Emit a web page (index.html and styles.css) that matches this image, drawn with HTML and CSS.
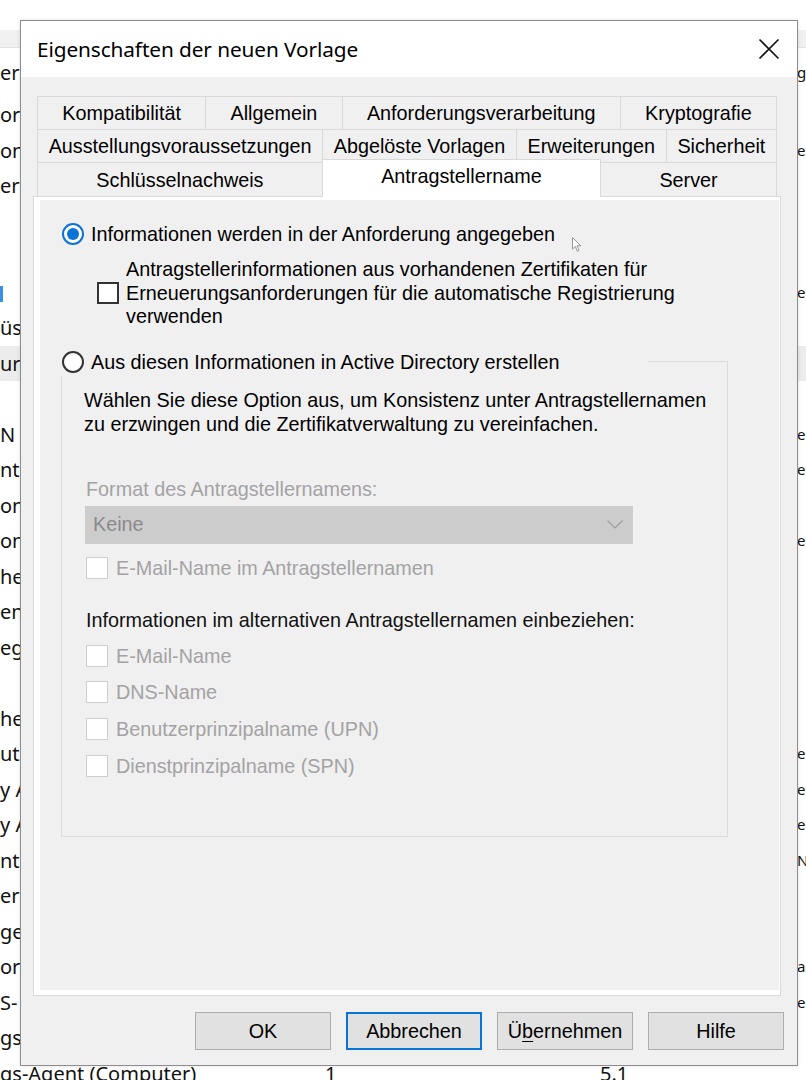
FILE: index.html
```html
<!DOCTYPE html>
<html lang="de">
<head>
<meta charset="utf-8">
<title>Eigenschaften der neuen Vorlage</title>
<link rel="stylesheet" href="styles.css">
</head>
<body>
<div class="bg">
  <div class="bg-head"></div>
  <div class="bg-row first"><span class="c1">er</span><span class="c2"></span><span class="c3"></span><span class="c4">g</span></div>
  <div class="bg-row"><span class="c1">or</span><span class="c2"></span><span class="c3"></span><span class="c4"></span></div>
  <div class="bg-row"><span class="c1">ons</span><span class="c2"></span><span class="c3"></span><span class="c4">e</span></div>
  <div class="bg-row"><span class="c1">ert</span><span class="c2"></span><span class="c3"></span><span class="c4"></span></div>
  <div class="bg-row"><span class="c1"></span><span class="c2"></span><span class="c3"></span><span class="c4"></span></div>
  <div class="bg-row"><span class="c1"></span><span class="c2"></span><span class="c3"></span><span class="c4"></span></div>
  <div class="bg-row"><span class="c1"><span class="blue-mark"></span></span><span class="c2"></span><span class="c3"></span><span class="c4">e</span></div>
  <div class="bg-row"><span class="c1">üs</span><span class="c2"></span><span class="c3"></span><span class="c4"></span></div>
  <div class="bg-row sel"><span class="c1">ur</span><span class="c2"></span><span class="c3"></span><span class="c4"></span></div>
  <div class="bg-row"><span class="c1"></span><span class="c2"></span><span class="c3"></span><span class="c4"></span></div>
  <div class="bg-row"><span class="c1">N</span><span class="c2"></span><span class="c3"></span><span class="c4">e</span></div>
  <div class="bg-row"><span class="c1">ntr</span><span class="c2"></span><span class="c3"></span><span class="c4">e</span></div>
  <div class="bg-row"><span class="c1">ont</span><span class="c2"></span><span class="c3"></span><span class="c4"></span></div>
  <div class="bg-row"><span class="c1">ont</span><span class="c2"></span><span class="c3"></span><span class="c4">e</span></div>
  <div class="bg-row"><span class="c1">he</span><span class="c2"></span><span class="c3"></span><span class="c4"></span></div>
  <div class="bg-row"><span class="c1">en</span><span class="c2"></span><span class="c3"></span><span class="c4"></span></div>
  <div class="bg-row"><span class="c1">eg</span><span class="c2"></span><span class="c3"></span><span class="c4"></span></div>
  <div class="bg-row"><span class="c1"></span><span class="c2"></span><span class="c3"></span><span class="c4"></span></div>
  <div class="bg-row"><span class="c1">hea</span><span class="c2"></span><span class="c3"></span><span class="c4"></span></div>
  <div class="bg-row"><span class="c1">uth</span><span class="c2"></span><span class="c3"></span><span class="c4">e</span></div>
  <div class="bg-row"><span class="c1">y A</span><span class="c2"></span><span class="c3"></span><span class="c4">e</span></div>
  <div class="bg-row"><span class="c1">y A</span><span class="c2"></span><span class="c3"></span><span class="c4">e</span></div>
  <div class="bg-row"><span class="c1">nts</span><span class="c2"></span><span class="c3"></span><span class="c4">N</span></div>
  <div class="bg-row"><span class="c1">ers</span><span class="c2"></span><span class="c3"></span><span class="c4"></span></div>
  <div class="bg-row"><span class="c1">ge-</span><span class="c2"></span><span class="c3"></span><span class="c4"></span></div>
  <div class="bg-row"><span class="c1">or</span><span class="c2"></span><span class="c3"></span><span class="c4">a</span></div>
  <div class="bg-row"><span class="c1">S-</span><span class="c2"></span><span class="c3"></span><span class="c4">e</span></div>
  <div class="bg-row"><span class="c1">gs</span><span class="c2"></span><span class="c3"></span><span class="c4"></span></div>
  <div class="bg-row"><span class="c1">gs-Agent (Computer)</span><span class="c2">1</span><span class="c3">5.1</span><span class="c4"></span></div>
</div>

<div class="dialog">
  <div class="titlebar">
    <span class="title">Eigenschaften der neuen Vorlage</span>
    <svg class="close" viewBox="0 0 22 22" width="22" height="22"><path d="M1.5 1.5 L20.5 20.5 M20.5 1.5 L1.5 20.5" stroke="#111" stroke-width="1.6" fill="none"/></svg>
  </div>
  <div class="body">
    <div class="tabs">
      <div class="tabrow">
        <div class="tab">Kompatibilität</div>
        <div class="tab">Allgemein</div>
        <div class="tab">Anforderungsverarbeitung</div>
        <div class="tab">Kryptografie</div>
      </div>
      <div class="tabrow">
        <div class="tab">Ausstellungsvoraussetzungen</div>
        <div class="tab">Abgelöste Vorlagen</div>
        <div class="tab">Erweiterungen</div>
        <div class="tab">Sicherheit</div>
      </div>
      <div class="tabrow last">
        <div class="tab">Schlüsselnachweis</div>
        <div class="tab active">Antragstellername</div>
        <div class="tab">Server</div>
      </div>
    </div>
    <div class="panel">
      <div class="page">
        <div class="opt">
          <span class="radio checked"></span>
          <span>Informationen werden in der Anforderung angegeben</span>
        </div>
        <div class="check-block">
          <span class="box"></span>
          <span class="check-text">Antragstellerinformationen aus vorhandenen Zertifikaten für<br>Erneuerungsanforderungen für die automatische Registrierung<br>verwenden</span>
        </div>
        <div class="group">
          <div class="group-head">
            <span class="radio"></span>
            <span>Aus diesen Informationen in Active Directory erstellen</span>
          </div>
          <p class="desc">Wählen Sie diese Option aus, um Konsistenz unter Antragstellernamen<br>zu erzwingen und die Zertifikatverwaltung zu vereinfachen.</p>
          <div class="label dis">Format des Antragstellernamens:</div>
          <div class="combo">
            <span>Keine</span>
            <svg viewBox="0 0 16 9" width="16" height="9"><polyline points="0.5,0.5 8,8 15.5,0.5" fill="none" stroke="#9c9c9c" stroke-width="1.2"/></svg>
          </div>
          <div class="dcheck first"><span class="dbox"></span><span>E-Mail-Name im Antragstellernamen</span></div>
          <div class="label alt">Informationen im alternativen Antragstellernamen einbeziehen:</div>
          <div class="dlist">
            <div class="dcheck"><span class="dbox"></span><span>E-Mail-Name</span></div>
            <div class="dcheck"><span class="dbox"></span><span>DNS-Name</span></div>
            <div class="dcheck"><span class="dbox"></span><span>Benutzerprinzipalname (UPN)</span></div>
            <div class="dcheck"><span class="dbox"></span><span>Dienstprinzipalname (SPN)</span></div>
          </div>
        </div>
      </div>
    </div>
    <div class="buttons">
      <button class="btn">OK</button>
      <button class="btn default">Abbrechen</button>
      <button class="btn">Ü<u>b</u>ernehmen</button>
      <button class="btn">Hilfe</button>
    </div>
  </div>
  <svg class="cursor" viewBox="0 0 10 15" width="10" height="15"><path d="M0.5 0.5 L0.5 12 L3.2 9.4 L5.3 14.2 L7 13.4 L5 8.8 L8.8 8.8 Z" fill="#fff" stroke="#8a8a8a" stroke-width="0.9"/></svg>
</div>
</body>
</html>
```

FILE: styles.css
```css
* { box-sizing: border-box; }
html, body { margin: 0; padding: 0; }
body {
  width: 806px;
  height: 1080px;
  overflow: hidden;
  background: #fff;
  position: relative;
  font-family: "Noto Sans", "Open Sans", sans-serif;
}

/* background list window */
.bg { padding-top: 30px; }
.bg-head {
  height: 18px;
  background: #f0f0f0;
  border-bottom: 1px solid #e3e3e3;
}
.bg-row {
  display: grid;
  grid-template-columns: 325px 275px 197px 9px;
  height: 35.5px;
  line-height: 35.5px;
  font-size: 20px;
  color: #111;
  white-space: nowrap;
  overflow: hidden;
}
.bg-row.first { height: 49.25px; line-height: 49px; }
.bg-row.sel { background: #ececec; }
.c1, .c2, .c3 { overflow: hidden; }
.c4 { font-size: 15px; }
.blue-mark {
  display: inline-block;
  width: 3px;
  height: 16px;
  background: #3b8fe0;
  vertical-align: middle;
}

/* dialog window */
.dialog {
  position: absolute;
  left: 20px;
  top: 20px;
  width: 778px;
  height: 1046px;
  border: 1px solid #8d8d8d;
  background: #f0f0f0;
  box-shadow: 0 0 4px rgba(0,0,0,0.12);
  font-family: "Liberation Sans", Arial, sans-serif;
  font-size: 19.8px;
  color: #000;
}
.titlebar {
  height: 56px;
  background: #fff;
  display: flex;
  align-items: center;
  justify-content: space-between;
  padding: 0 17px 0 16px;
}
.title {
  font-family: "Noto Sans", "Open Sans", sans-serif;
  font-size: 20.8px;
  color: #000;
  letter-spacing: -0.1px;
}
.close { display: block; }

.body { padding: 19px 16px 15px 12px; }

.tabs { padding: 0 4px; }
.tabrow {
  display: flex;
  height: 33px;
}
.tabrow.last { height: 34px; align-items: flex-end; }
.tab {
  flex: 1 1 auto;
  border: 1px solid #d9d9d9;
  border-bottom: none;
  margin-left: -1px;
  text-align: center;
  line-height: 32px;
  white-space: nowrap;
  background: #f0f0f0;
}
.tab:first-child { margin-left: 0; }
.tabrow.last .tab { height: 34px; line-height: 34px; }
.tabrow.last .tab.active {
  height: 38px;
  line-height: 32px;
  margin-bottom: -1px;
  background: #fff;
  position: relative;
  z-index: 1;
  padding-bottom: 4px;
}

.panel {
  height: 800px;
  border: 1px solid #d9d9d9;
  background: #fff;
  padding: 3px 1px 5px 6px;
}
.page {
  height: 790px;
  background: #f0f0f0;
  padding: 22px 0 0 22px;
}

.opt, .group-head {
  display: flex;
  align-items: center;
  gap: 7px;
  height: 24px;
  line-height: 24px;
  white-space: nowrap;
}
.radio {
  flex: none;
  width: 22px;
  height: 22px;
  border-radius: 50%;
  border: 2px solid #333;
  background: #fff;
  position: relative;
}
.radio.checked { border-color: #0a74d6; }
.radio.checked::after {
  content: "";
  position: absolute;
  left: 3px;
  top: 3px;
  width: 12px;
  height: 12px;
  border-radius: 50%;
  background: #0a74d6;
}

.check-block {
  display: flex;
  align-items: center;
  gap: 7px;
  margin: 12px 0 0 35px;
}
.box {
  flex: none;
  width: 22px;
  height: 22px;
  border: 2px solid #333;
  background: #fff;
}
.check-text { line-height: 23.5px; white-space: nowrap; }

.group {
  margin: 32px 0 0 -1px;
  width: 667px;
  border: 1px solid #dcdcdc;
  padding: 0 0 58px 22px;
}
.group-head {
  margin: -14px 0 0 -25px;
  padding-left: 3px;
  width: 589px;
  height: 28px;
  background: #f0f0f0;
}
.desc {
  margin: 12px 0 0 0;
  line-height: 24.5px;
  white-space: nowrap;
}
.label { line-height: 24px; white-space: nowrap; }
.dis { color: #a3a3a3; }
.label.dis { margin: 40px 0 0 2px; }
.combo {
  margin: 5px 0 0 1px;
  width: 548px;
  height: 38px;
  background: #cccccc;
  display: flex;
  align-items: center;
  justify-content: space-between;
  padding: 0 10px 0 8px;
  color: #8a8a8a;
}
.combo svg { display: block; }
.dcheck {
  display: flex;
  align-items: center;
  gap: 8px;
  height: 24px;
  line-height: 24px;
  margin-left: 2px;
  color: #a3a3a3;
  white-space: nowrap;
}
.dcheck.first { margin-top: 12px; }
.dbox {
  flex: none;
  width: 22px;
  height: 22px;
  border: 1.5px solid #cfcfcf;
  background: #fff;
}
.label.alt { margin: 28px 0 0 2px; color: #111; }
.dlist {
  display: flex;
  flex-direction: column;
  gap: 12.7px;
  margin-top: 12px;
}

.buttons {
  display: flex;
  justify-content: flex-end;
  gap: 15px;
  margin-top: 16px;
  margin-right: -3px;
}
.btn {
  width: 136px;
  height: 38px;
  background: #e1e1e1;
  border: 1px solid #adadad;
  font-family: "Liberation Sans", Arial, sans-serif;
  font-size: 19.8px;
  color: #000;
  padding: 0;
}
.btn.default { border: 2px solid #0a74d6; }
.btn u { text-underline-offset: 3px; }

.cursor {
  position: absolute;
  left: 551px;
  top: 216px;
}
```
